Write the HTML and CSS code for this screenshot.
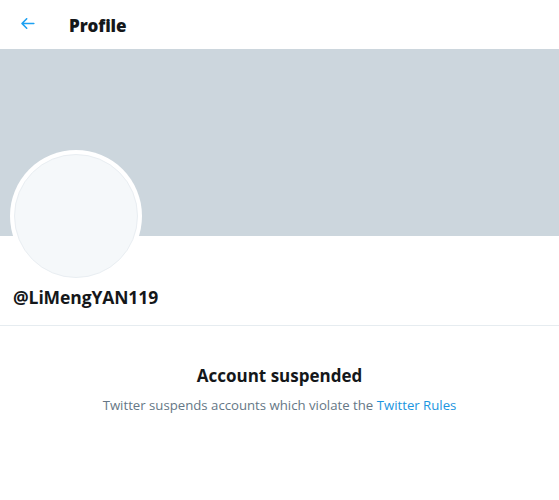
FILE: index.html
```html
<!DOCTYPE html>
<html>
<head>
<meta charset="utf-8">
<link rel="stylesheet" href="styles.css">
</head>
<body>
<div class="page">
  <header class="topbar">
    <div class="back">
      <svg viewBox="0 0 24 24" width="19" height="19"><path fill="#1da1f2" d="M20 11H7.414l4.293-4.293c.39-.39.39-1.023 0-1.414s-1.023-.39-1.414 0l-6 6c-.39.39-.39 1.023 0 1.414l6 6c.195.195.45.293.707.293s.512-.098.707-.293c.39-.39.39-1.023 0-1.414L7.414 13H20c.553 0 1-.447 1-1s-.447-1-1-1z"/></svg>
    </div>
    <h1 class="title">Profile</h1>
  </header>
  <div class="banner"></div>
  <div class="info">
    <div class="avatar"><div class="avatar-inner"></div></div>
    <div class="handle">@LiMengYAN119</div>
  </div>
  <div class="suspended">
    <div class="s-title">Account suspended</div>
    <div class="s-text">Twitter suspends accounts which violate the <a class="link" href="#">Twitter Rules</a></div>
  </div>
</div>
</body>
</html>
```
FILE: styles.css
```css
* { box-sizing: border-box; }
html, body { margin: 0; padding: 0; background: #fff; }
body { font-family: "Open Sans", "Segoe UI", sans-serif; color: #14171a; }
.page { width: 559px; }
.topbar { height: 49px; display: flex; align-items: center; padding-left: 18px; }
.back { width: 19px; height: 19px; display: flex; margin-right: 32px; margin-top: -2px; }
.title { margin: 2px 0 0; font-size: 17px; font-weight: 800; letter-spacing: -0.1px; }
.banner { height: 187px; background: #ccd6dd; }
.info { display: flow-root; padding: 0 13px 16px; border-bottom: 1px solid #e6ecf0; }
.avatar { width: 132px; height: 132px; border-radius: 50%; background: #fff; padding: 4px; margin-top: -86px; margin-left: -3px; }
.avatar-inner { width: 100%; height: 100%; border-radius: 50%; background: #f5f8fa; border: 1px solid #e9eef2; }
.handle { font-size: 17.5px; line-height: 24px; font-weight: 700; margin-top: 3px; letter-spacing: -0.1px; }
.suspended { text-align: center; padding-top: 38px; }
.s-title { font-size: 17px; line-height: 24px; font-weight: 700; }
.s-text { font-size: 13.2px; line-height: 19px; color: #657786; margin-top: 8px; }
.link { color: #1b95e0; text-decoration: none; }
```
